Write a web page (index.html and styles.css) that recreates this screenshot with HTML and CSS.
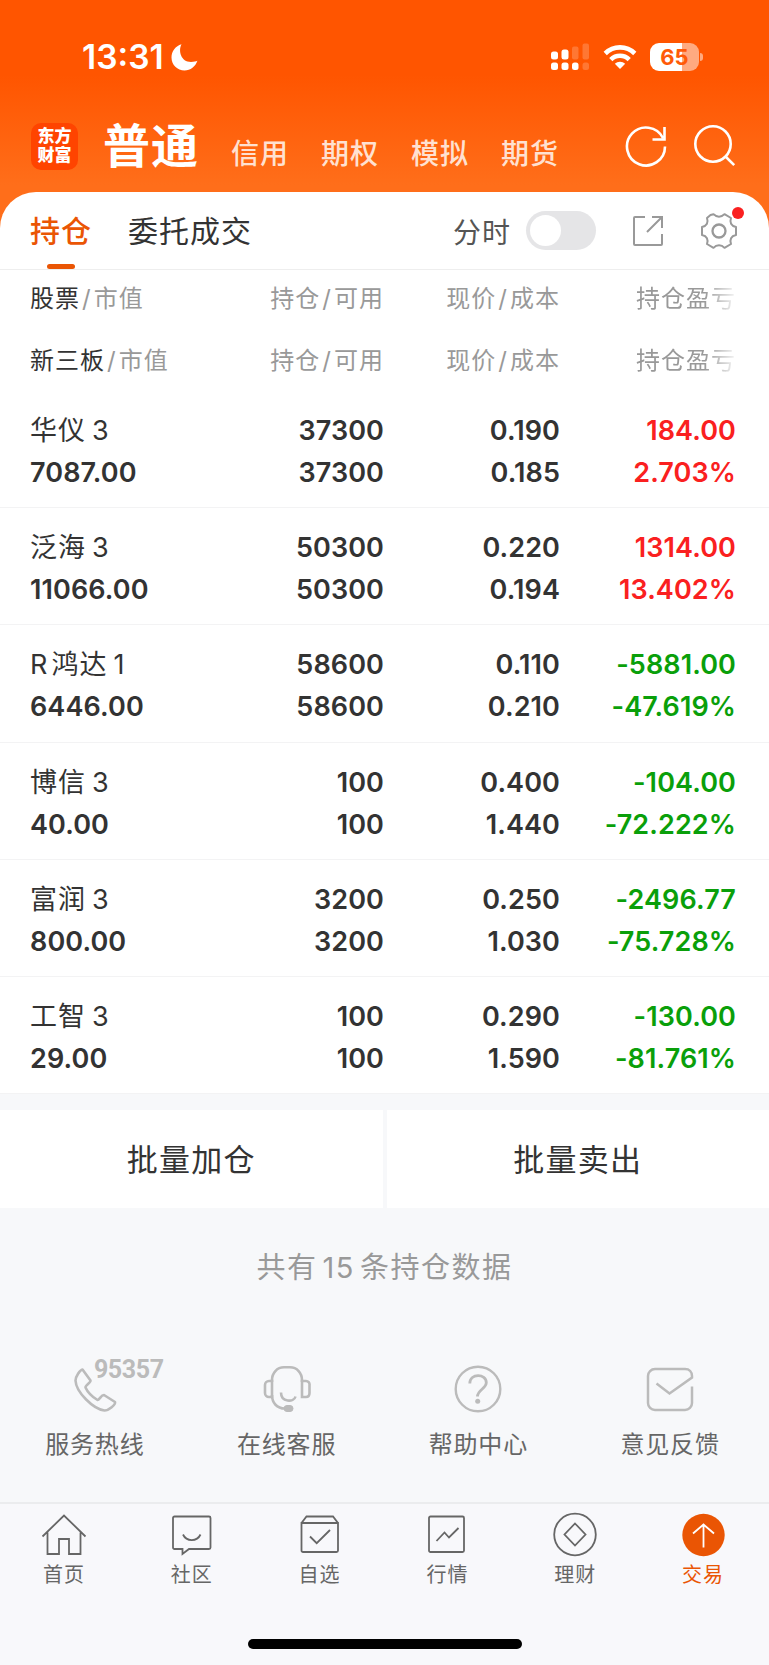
FILE: index.html
```html
<!DOCTYPE html>
<html lang="zh-CN">
<head>
    <meta charset="UTF-8">
    <meta name="viewport" content="width=device-width, initial-scale=1.0">
    <title>持仓</title>
    <link rel="stylesheet" href="styles.css">
</head>
<body>

    <header class="top">
        <div class="status">
            <span class="time">13:31</span>
            <svg class="moon" width="27" height="27" viewBox="0 0 27 27"><path d="M10.500 .3C7 7 10 18 20 18c3 0 5-.6 6.400-1.200C24.500 22.500 19.500 26.500 13.500 26.500 6.500 26.500 .5 21 .5 13.500.5 7.500 4.500 2 10.500.3z" fill="#fff"/></svg>
            <svg class="signal" width="39" height="28" viewBox="0 0 39 28" fill="#fff">
                <rect x="0" y="8.500" width="7" height="8" rx="2.500"/>
                <rect x="10.500" y="6.500" width="7" height="10" rx="2.500"/>
                <rect x="21" y="3.500" width="6.500" height="13" rx="2" opacity=".2"/>
                <rect x="31.500" y="0.500" width="6.500" height="16" rx="2" opacity=".2"/>
                <rect x="0" y="19.500" width="7" height="7.500" rx="2.500"/>
                <rect x="10.500" y="19.500" width="7" height="7.500" rx="2.500"/>
                <rect x="21" y="19.500" width="6.500" height="7.500" rx="2.500"/>
                <rect x="31.500" y="19.500" width="6.500" height="7.500" rx="2.500" opacity=".2"/>
            </svg>
            <svg class="wifi" width="34" height="26" viewBox="0 0 34 26">
                <g fill="none" stroke="#fff" stroke-width="4.600">
                    <path d="M2.200 9.500a21 21 0 0 1 29.600 0"/>
                    <path d="M7.800 15.500a13 13 0 0 1 18.400 0"/>
                </g>
                <path d="M17 25l-5.200-5.200a7.500 7.500 0 0 1 10.400 0z" fill="#fff"/>
            </svg>
            <span class="battery">65</span>
            <span class="battery-nub"></span>
        </div>

        <nav class="accounts">
            <div class="logo"><span>东方</span><span>财富</span></div>
            <a class="account active">普通</a>
            <a class="account">信用</a>
            <a class="account">期权</a>
            <a class="account">模拟</a>
            <a class="account">期货</a>
            <svg class="refresh" width="44" height="44" viewBox="0 0 44 44" fill="none" stroke="#fff" stroke-width="2.600">
                <path d="M40 22.500A19 19 0 1 1 38 14M39.500 3v12.500H27.500"/>
            </svg>
            <svg class="search" width="44" height="44" viewBox="0 0 44 44" fill="none" stroke="#fff" stroke-width="2.600">
                <circle cx="20" cy="20" r="17.700"/><path d="M32.500 32.500l8.700 8.700"/>
            </svg>
        </nav>
    </header>

    <main class="card">
        <div class="tabs">
            <a class="tab active">持仓</a>
            <a class="tab">委托成交</a>
            <span class="switch-label">分时</span>
            <span class="switch"></span>
            <svg class="export" width="32" height="32" viewBox="0 0 32 32" fill="none" stroke="#999" stroke-width="2">
                <path d="M13 2H3a1 1 0 0 0-1 1v26a1 1 0 0 0 1 1h26a1 1 0 0 0 1-1V19M20 2h10v11M30 2L15 17"/>
            </svg>
            <span class="settings">
                <svg width="38" height="38" viewBox="0 0 38 38" fill="none" stroke="#999" stroke-width="2" stroke-linejoin="round">
                    <path d="M10.500 3L13.500 2.200C16.500 5.500 21.500 5.500 24.500 2.200L31 6C29.500 10.500 31 13.800 36 15V23C31 24 29.500 27.500 31 32L24.500 35.800C21.500 32.500 16.500 32.500 13.500 35.800L7 32C8.500 27.500 7 24 2 23V15C7 13.800 8.500 10.500 7 6z"/>
                    <circle cx="19" cy="19" r="6.500" stroke-width="2.300"/>
                </svg>
                <i class="dot"></i>
            </span>
        </div>

        <div class="heads">
            <div class="head"><span><b>股票</b><i>/</i>市值</span><span>持仓<i>/</i>可用</span><span>现价<i>/</i>成本</span><span class="fade">持仓盈亏</span></div>
            <div class="head"><span><b>新三板</b><i>/</i>市值</span><span>持仓<i>/</i>可用</span><span>现价<i>/</i>成本</span><span class="fade">持仓盈亏</span></div>
        </div>

        <div class="row up">
            <span class="name">华仪<em>3</em></span><span>37300</span><span>0.190</span><span>184.00</span>
            <span>7087.00</span><span>37300</span><span>0.185</span><span>2.703%</span>
        </div>
        <div class="row up">
            <span class="name">泛海<em>3</em></span><span>50300</span><span>0.220</span><span>1314.00</span>
            <span>11066.00</span><span>50300</span><span>0.194</span><span>13.402%</span>
        </div>
        <div class="row down">
            <span class="name"><em class="first">R</em>鸿达<em>1</em></span><span>58600</span><span>0.110</span><span>-5881.00</span>
            <span>6446.00</span><span>58600</span><span>0.210</span><span>-47.619%</span>
        </div>
        <div class="row down">
            <span class="name">博信<em>3</em></span><span>100</span><span>0.400</span><span>-104.00</span>
            <span>40.00</span><span>100</span><span>1.440</span><span>-72.222%</span>
        </div>
        <div class="row down">
            <span class="name">富润<em>3</em></span><span>3200</span><span>0.250</span><span>-2496.77</span>
            <span>800.00</span><span>3200</span><span>1.030</span><span>-75.728%</span>
        </div>
        <div class="row down">
            <span class="name">工智<em>3</em></span><span>100</span><span>0.290</span><span>-130.00</span>
            <span>29.00</span><span>100</span><span>1.590</span><span>-81.761%</span>
        </div>
    </main>

    <div class="batch">
        <a>批量加仓</a>
        <a>批量卖出</a>
    </div>

    <p class="count">共有<em>15</em>条持仓数据</p>

    <div class="services">
        <a class="service">
            <span class="hotline">
                <svg width="48" height="48" viewBox="0 0 48 48" fill="none" stroke="#bbb" stroke-width="2.600" stroke-linejoin="round">
                    <path d="M11.500 4.500L19.500 15.500C20 17.500 14 20.500 14.500 22.500C16.500 27 21.500 32 26.500 35C28.500 35 30 30 33 30L44 37C45 39.500 37.500 45.500 33.500 45.500C22 44 5 27 4.500 15.500C4.500 11.500 9 5 11.500 4.500z"/>
                </svg>
                <span class="number">95357</span>
            </span>
            服务热线
        </a>
        <a class="service">
            <svg width="48" height="48" viewBox="0 0 48 48" fill="none" stroke="#bbb" stroke-width="2.600">
                <path d="M9 16H6a4 4 0 0 0-4 4v8a4 4 0 0 0 4 4h3zM39 16h4a3.500 3.500 0 0 1 3.500 4v8c0 3-1 4-3.500 4h-4z"/>
                <path d="M9 17v-2c0-7 5-12.700 12-12.700h6c7 0 12 5.700 12 12.700v2M9 30c0 8 5 13.500 13 13.500M18 27.500c0 10 13 10 14.500 4"/>
                <rect x="21" y="40.500" width="9" height="6" rx="3" fill="#bbb" stroke-width="1"/>
            </svg>
            在线客服
        </a>
        <a class="service">
            <svg width="48" height="48" viewBox="0 0 48 48" fill="none" stroke="#bbb" stroke-width="2.400">
                <circle cx="24" cy="24" r="22.300"/>
                <path d="M15.800 18.500c0-10.500 16.500-10 16.500-1 0 6.500-8.800 7-8.800 14" stroke-width="2.800"/>
                <circle cx="23.700" cy="36.300" r="2.500" fill="#bbb" stroke="none"/>
            </svg>
            帮助中心
        </a>
        <a class="service">
            <svg width="48" height="48" viewBox="0 0 48 48" fill="none" stroke="#bbb" stroke-width="2.500">
                <path d="M46 21.500V38a7 7 0 0 1-7 7H9a7 7 0 0 1-7-7V11a7 7 0 0 1 7-7h30c4.500 0 7 3 7 7v1.500L23.500 28.500 10.500 18.500"/>
            </svg>
            意见反馈
        </a>
    </div>

    <footer class="bottom">
        <nav class="menu">
            <a class="item">
                <svg width="46" height="46" viewBox="0 0 46 46"><path d="M1.500 24.500L23 3.500 44.500 24.500M6.500 20.500V42H18V27H28V42H39.500V20.500"/></svg>
                首页
            </a>
            <a class="item">
                <svg width="46" height="46" viewBox="0 0 46 46"><path d="M5.500 4.500h34.500a1.500 1.500 0 0 1 1.500 1.500v29.500a1.500 1.500 0 0 1-1.500 1.500H20L13.500 42V37H5.500A1.500 1.500 0 0 1 4 35.500V6a1.500 1.500 0 0 1 1.500-1.500zM14 22.500c3.500 7.500 14 7.500 17.500 0"/></svg>
                社区
            </a>
            <a class="item">
                <svg width="46" height="46" viewBox="0 0 46 46"><path d="M4.500 11L9.500 4.500H36L41 11M4.500 11H41V38.500A1.500 1.500 0 0 1 39.500 40H6A1.500 1.500 0 0 1 4.500 38.500zM13 24.500L19.700 31.200 33 18"/></svg>
                自选
            </a>
            <a class="item">
                <svg width="46" height="46" viewBox="0 0 46 46"><rect x="5" y="4.500" width="35" height="35.500" rx="1.500"/><path d="M12.500 29L20.500 20.500 25 25.500 34.500 16"/></svg>
                行情
            </a>
            <a class="item">
                <svg width="46" height="46" viewBox="0 0 46 46"><circle cx="23" cy="22.500" r="20.800"/><path d="M23 11.500L33.500 22.500 23 33.500 12.500 22.500z"/></svg>
                理财
            </a>
            <a class="item active">
                <svg width="46" height="46" viewBox="0 0 46 46"><circle class="disc" cx="23.500" cy="23" r="21.200"/><path class="arrow" d="M23.500 35.500V12.500M13 21.500L23.500 12.500 34 21.500"/></svg>
                交易
            </a>
        </nav>
        <div class="home-bar"></div>
    </footer>

</body>
</html>
```

FILE: styles.css
```css
body {
    margin: 0;
    width: 769px;
    height: 1665px;
    display: flex;
    flex-direction: column;
    overflow: hidden;
    background: #f7f8fa;
    font-family: Inter, "Noto Sans CJK SC", sans-serif;
    color: #333;
}

svg {
    display: block;
    flex: none;
}

em, i {
    font-style: normal;
}

/* header */
.top {
    height: 228px;
    box-sizing: border-box;
    background: linear-gradient(#ff5500 75px, #ff6e1a 185px);
    flex: none;
}

.status {
    display: flex;
    align-items: center;
    height: 114px;
    padding: 0 66px 0 82px;
    color: #fff;
}

.time {
    width: 89px;
    font-size: 33.5px;
    font-weight: 600;
}

.moon {
    margin-top: 1px;
}

.signal {
    margin-left: auto;
    margin-right: 13px;
}

.wifi {
    margin-right: 13px;
}

.battery {
    width: 49px;
    height: 28px;
    border-radius: 9px;
    background: linear-gradient(90deg, #fff 66%, #ffaa80 66%);
    color: #ff5a08;
    font-size: 22px;
    font-weight: 700;
    line-height: 29px;
    text-align: center;
}

.battery-nub {
    width: 3px;
    height: 8px;
    margin-left: 1px;
    border-radius: 0 4px 4px 0;
    background: #ffaa80;
}

.accounts {
    display: flex;
    align-items: center;
    height: 64px;
    padding: 0 32px 0 31px;
}

.logo {
    display: flex;
    flex-direction: column;
    justify-content: center;
    width: 47px;
    height: 47px;
    margin: 0 25px 0 0;
    border-radius: 10px;
    background: #ff4400;
    color: #fff;
    font-size: 17px;
    font-weight: 900;
    line-height: 19px;
    text-align: center;
}

.account {
    width: 90px;
    padding-top: 12px;
    font-size: 28px;
    font-weight: 500;
    letter-spacing: 1px;
    color: #ffe1d1;
}

.account.active {
    width: 128px;
    padding: 0 0 8px;
    font-size: 47px;
    font-weight: 700;
    color: #fff;
}

.refresh {
    margin-left: auto;
    margin-right: 24px;
}

/* white card */
.card {
    height: 902px;
    margin-top: -36px;
    border-radius: 36px 36px 0 0;
    background: #fff;
    flex: none;
}

.tabs {
    display: flex;
    align-items: center;
    height: 77px;
    padding: 0 31px 0 30px;
    border-bottom: 1px solid #eee;
}

.tab {
    display: flex;
    flex-direction: column;
    align-items: center;
    margin-right: 36px;
    font-size: 30px;
    line-height: 76px;
    letter-spacing: 1px;
}

.tab.active {
    font-weight: 500;
    color: #ea5504;
}

.tab.active::after {
    content: "";
    width: 28px;
    height: 5px;
    margin-top: -5px;
    border-radius: 3px;
    background: #ea5504;
}

.switch-label {
    margin-left: auto;
    margin-right: 15px;
    font-size: 28px;
    letter-spacing: 1px;
    color: #555;
}

.switch {
    width: 62px;
    height: 31px;
    padding: 4px;
    border-radius: 20px;
    background: #e5e5e7;
}

.switch::before {
    content: "";
    display: block;
    width: 31px;
    height: 31px;
    border-radius: 50%;
    background: #fff;
}

.export {
    margin: 0 36px;
}

.settings {
    position: relative;
}

.dot {
    position: absolute;
    top: -5px;
    right: -6px;
    width: 12px;
    height: 12px;
    border-radius: 50%;
    background: #fa2020;
}

/* positions */
.head, .row {
    display: grid;
    grid-template-columns: 170px 184px 176px 176px;
    padding-left: 30px;
}

.head span, .row span {
    text-align: right;
    white-space: nowrap;
}

.head span:nth-child(4n+1), .row span:nth-child(4n+1) {
    text-align: left;
}

.heads {
    height: 121px;
}

.head {
    height: 62px;
    line-height: 58px;
    font-size: 24px;
    letter-spacing: 1px;
    color: #999;
}

.head b {
    font-weight: 400;
    color: #333;
}

.head i {
    margin: 0 2px;
}

.fade {
    -webkit-mask-image: linear-gradient(90deg, #000 82%, transparent 102%);
    mask-image: linear-gradient(90deg, #000 82%, transparent 102%);
}

.row {
    height: 109.2px;
    padding-top: 7px;
    grid-template-rows: 42px 43px;
    align-content: center;
    border-bottom: 1px solid #f3f3f4;
    font-size: 27px;
    font-weight: 600;
    line-height: 42px;
    letter-spacing: 0.1px;
}

.row .name {
    font-weight: 400;
    letter-spacing: 1px;
}

.name em {
    margin-left: 6px;
}

.name .first {
    margin: 0 3px 0 0;
}

.up span:nth-child(4n) {
    color: #fa2020;
}

.down span:nth-child(4n) {
    color: #0a9f0a;
}

/* batch buttons */
.batch {
    display: flex;
    gap: 4px;
    height: 98px;
    margin-top: 16px;
    flex: none;
}

.batch a {
    flex: 1;
    background: #fff;
    font-size: 31px;
    line-height: 100px;
    letter-spacing: 1.2px;
    text-align: center;
}

.count {
    margin: 0;
    height: 118px;
    line-height: 119px;
    font-size: 29px;
    letter-spacing: 1.5px;
    text-align: center;
    color: #999;
    flex: none;
}

.count em {
    margin: 0 5px;
}

/* services */
.services {
    display: flex;
    height: 137px;
    padding: 39px 3px 0 0;
    margin-left: -1px;
    flex: none;
}

.service {
    display: flex;
    flex-direction: column;
    align-items: center;
    flex: 1;
    font-size: 24px;
    line-height: 36px;
    letter-spacing: 0.8px;
    color: #666;
}

.service svg {
    margin-bottom: 14px;
}

.hotline {
    position: relative;
}

.number {
    position: absolute;
    left: 23px;
    top: -13px;
    font-family: Roboto, sans-serif;
    font-size: 25px;
    font-weight: 700;
    letter-spacing: -0.4px;
    color: #bbb;
}

/* bottom menu */
.bottom {
    flex: 1;
    border-top: 2px solid #ebecee;
    background: #f8f8fb;
}

.menu {
    display: flex;
    height: 135px;
    padding-right: 2px;
}

.item {
    display: flex;
    flex-direction: column;
    align-items: center;
    flex: 1;
    padding-top: 8px;
    font-size: 20px;
    line-height: 35px;
    letter-spacing: 1px;
    color: #666;
}

.item svg {
    fill: none;
    stroke: #666;
    stroke-width: 1.8;
}

.item.active {
    color: #ea5504;
}

.item .disc {
    fill: #ea5504;
    stroke: none;
}

.item .arrow {
    stroke: #fff;
}

.home-bar {
    width: 274px;
    height: 10px;
    margin: 0 auto;
    border-radius: 5px;
    background: #000;
}
```
